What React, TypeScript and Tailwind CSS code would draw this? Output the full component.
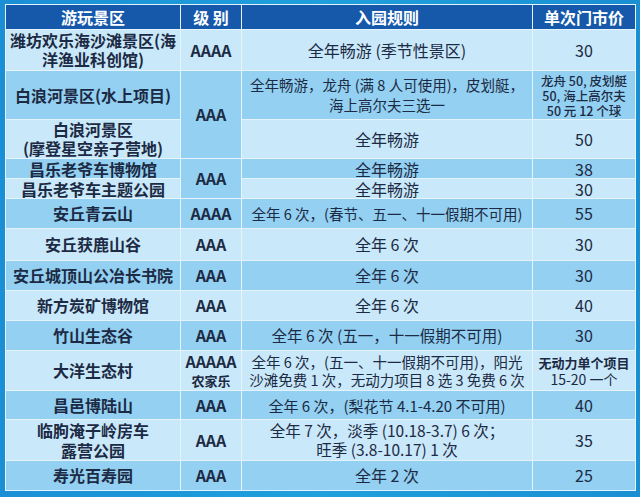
import React from "react";

const FONT = { fontFamily: '"Noto Sans CJK SC", "Noto Sans", sans-serif' };

const LIGHT = "bg-[#c9e8f9]";
const DARK = "bg-[#93d0f1]";
const CELL = "border border-[#e4f3fc] text-center align-middle p-0 whitespace-nowrap";

export default function App() {
  return (
    <div
      className="w-[640px] h-[497px] bg-gradient-to-r from-[#1b8fd6] via-[#1fa0dc] to-[#1a8fd2] pt-[4px] pl-[5px] overflow-hidden"
      style={FONT}
    >
      <table className="w-[630px] border-collapse table-fixed text-[#1c2a44]">
        <colgroup>
          <col className="w-[175px]" />
          <col className="w-[61px]" />
          <col className="w-[291px]" />
          <col className="w-[103px]" />
        </colgroup>
        <thead>
          <tr className="h-[25px] bg-[#1659ab] text-white text-[16px] leading-[20px] font-bold">
            <th className={CELL + " border-[#4f8bcc]"}>游玩景区</th>
            <th className={CELL + " border-[#4f8bcc]"}>级 别</th>
            <th className={CELL + " border-[#4f8bcc]"}>入园规则</th>
            <th className={CELL + " border-[#4f8bcc]"}>单次门市价</th>
          </tr>
        </thead>
        <tbody className="text-[16px] leading-[19px]">
          {/* 潍坊 */}
          <tr className={"h-[41px] " + LIGHT}>
            <td className={CELL + " font-bold"}>
              潍坊欢乐海沙滩景区(海
              <br />
              洋渔业科创馆)
            </td>
            <td className={CELL + " font-bold"}>AAAA</td>
            <td className={CELL}>全年畅游 (季节性景区)</td>
            <td className={CELL}>30</td>
          </tr>
          {/* 白浪河 水上 */}
          <tr className="h-[49px]">
            <td className={CELL + " font-bold " + DARK}>白浪河景区(水上项目)</td>
            <td rowSpan={2} className={CELL + " font-bold " + DARK}>
              AAA
            </td>
            <td className={CELL + " text-[14.5px] leading-[20px] " + DARK}>
              全年畅游，龙舟 (满 8 人可使用)，皮划艇，
              <br />
              海上高尔夫三选一
            </td>
            <td className={CELL + " text-[12.5px] leading-[15px] font-medium " + DARK}>
              龙舟 50, 皮划艇
              <br />
              50, 海上高尔夫
              <br />
              50 元 12 个球
            </td>
          </tr>
          {/* 白浪河 摩登 */}
          <tr className={"h-[39px] " + LIGHT}>
            <td className={CELL + " font-bold"}>
              白浪河景区
              <br />
              (摩登星空亲子营地)
            </td>
            <td className={CELL}>全年畅游</td>
            <td className={CELL}>50</td>
          </tr>
          {/* 昌乐 */}
          <tr className={"h-[20px] " + DARK}>
            <td className={CELL + " font-bold leading-[18px]"}>昌乐老爷车博物馆</td>
            <td rowSpan={2} className={CELL + " font-bold " + DARK}>
              AAA
            </td>
            <td className={CELL + " leading-[18px]"}>全年畅游</td>
            <td className={CELL + " leading-[18px]"}>38</td>
          </tr>
          <tr className={"h-[20px] " + LIGHT}>
            <td className={CELL + " font-bold leading-[18px]"}>昌乐老爷车主题公园</td>
            <td className={CELL + " leading-[18px]"}>全年畅游</td>
            <td className={CELL + " leading-[18px]"}>30</td>
          </tr>
          <tr className={"h-[30px] " + DARK}>
            <td className={CELL + " font-bold"}>安丘青云山</td>
            <td className={CELL + " font-bold"}>AAAA</td>
            <td className={CELL + " text-[14.5px]"}>全年 6 次，(春节、五一、十一假期不可用)</td>
            <td className={CELL}>55</td>
          </tr>
          <tr className={"h-[32px] " + LIGHT}>
            <td className={CELL + " font-bold"}>安丘获鹿山谷</td>
            <td className={CELL + " font-bold"}>AAA</td>
            <td className={CELL}>全年 6 次</td>
            <td className={CELL}>30</td>
          </tr>
          <tr className={"h-[30px] " + DARK}>
            <td className={CELL + " font-bold"}>安丘城顶山公冶长书院</td>
            <td className={CELL + " font-bold"}>AAA</td>
            <td className={CELL}>全年 6 次</td>
            <td className={CELL}>30</td>
          </tr>
          <tr className={"h-[30px] " + LIGHT}>
            <td className={CELL + " font-bold"}>新方炭矿博物馆</td>
            <td className={CELL + " font-bold"}>AAA</td>
            <td className={CELL}>全年 6 次</td>
            <td className={CELL}>40</td>
          </tr>
          <tr className={"h-[30px] " + DARK}>
            <td className={CELL + " font-bold"}>竹山生态谷</td>
            <td className={CELL + " font-bold"}>AAA</td>
            <td className={CELL + " text-[15.5px]"}>全年 6 次 (五一，十一假期不可用)</td>
            <td className={CELL}>30</td>
          </tr>
          <tr className={"h-[40px] " + LIGHT}>
            <td className={CELL + " font-bold"}>大洋生态村</td>
            <td className={CELL + " leading-[18px]"}>
              <span className="font-bold">AAAAA</span>
              <br />
              <span className="text-[13px] font-bold">农家乐</span>
            </td>
            <td className={CELL + " text-[14.5px] leading-[18px]"}>
              全年 6 次，(五一、十一假期不可用)，阳光
              <br />
              沙滩免费 1 次，无动力项目 8 选 3 免费 6 次
            </td>
            <td className={CELL + " text-[13px] leading-[17px] font-bold"}>
              无动力单个项目
              <br />
              <span className="font-normal text-[14px]">15-20 一个</span>
            </td>
          </tr>
          <tr className={"h-[29px] " + DARK}>
            <td className={CELL + " font-bold"}>昌邑博陆山</td>
            <td className={CELL + " font-bold"}>AAA</td>
            <td className={CELL + " text-[15px]"}>全年 6 次，(梨花节 4.1-4.20 不可用)</td>
            <td className={CELL}>40</td>
          </tr>
          <tr className={"h-[41px] " + LIGHT}>
            <td className={CELL + " font-bold leading-[20px]"}>
              临朐淹子岭房车
              <br />
              露营公园
            </td>
            <td className={CELL + " font-bold"}>AAA</td>
            <td className={CELL + " text-[15.5px]"}>
              全年 7 次，淡季 (10.18-3.7) 6 次；
              <br />
              旺季 (3.8-10.17) 1 次
            </td>
            <td className={CELL}>35</td>
          </tr>
          <tr className={"h-[30px] " + DARK}>
            <td className={CELL + " font-bold"}>寿光百寿园</td>
            <td className={CELL + " font-bold"}>AAA</td>
            <td className={CELL}>全年 2 次</td>
            <td className={CELL}>25</td>
          </tr>
        </tbody>
      </table>
    </div>
  );
}
